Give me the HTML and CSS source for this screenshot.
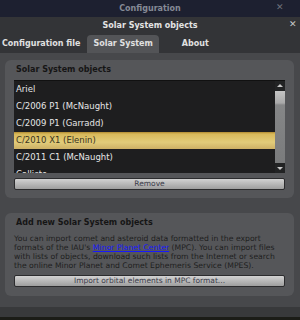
FILE: index.html
```html
<!DOCTYPE html>
<html>
<head>
<meta charset="utf-8">
<link rel="stylesheet" href="styles.css">
</head>
<body>
<div class="topbar">
  <span class="toptitle">Configuration</span>
  <span class="topclose">✕</span>
</div>
<div class="dialog">
  <div class="header">
    <span class="title">Solar System objects</span>
    <span class="close">✕</span>
  </div>
  <div class="tabs">
    <span class="tab">Configuration file</span>
    <span class="tab active">Solar System</span>
    <span class="tab about">About</span>
  </div>
  <div class="content">
    <div class="group g1">
      <div class="gtitle">Solar System objects</div>
      <div class="listwrap">
        <div class="list">
          <div class="item">Ariel</div>
          <div class="item">C/2006 P1 (McNaught)</div>
          <div class="item">C/2009 P1 (Garradd)</div>
          <div class="item sel">C/2010 X1 (Elenin)</div>
          <div class="item">C/2011 C1 (McNaught)</div>
          <div class="item">Callisto</div>
        </div>
        <div class="scroll">
          <div class="arrow up"></div>
          <div class="track"><div class="thumb"></div></div>
          <div class="arrow down"></div>
        </div>
      </div>
      <div class="btn">Remove</div>
    </div>
    <div class="group g2">
      <div class="gtitle">Add new Solar System objects</div>
      <p class="para">You can import comet and asteroid data formatted in the export formats of the IAU's <a class="link">Minor Planet Center</a> (MPC). You can import files with lists of objects, download such lists from the Internet or search the online Minor Planet and Comet Ephemeris Service (MPES).</p>
      <div class="btn">Import orbital elements in MPC format...</div>
    </div>
  </div>
</div>
<div class="floor"></div>
</body>
</html>
```
FILE: styles.css
```css
html, body {
  margin: 0;
  padding: 0;
  width: 300px;
  height: 320px;
  overflow: hidden;
  background: #1b1c17;
  font-family: "DejaVu Sans", sans-serif;
}
.topbar {
  height: 17px;
  background: #1d2030;
  display: flex;
  align-items: center;
  justify-content: center;
  position: relative;
}
.toptitle {
  color: #858a96;
  font-size: 8px;
  font-weight: bold;
}
.topclose {
  position: absolute;
  left: 276px;
  top: 2px;
  color: #6e727c;
  font-size: 9px;
  font-weight: bold;
}
.dialog {
  background: #333437;
  display: flex;
  flex-direction: column;
}
.header {
  height: 16px;
  display: flex;
  align-items: center;
  justify-content: center;
  position: relative;
}
.title {
  color: #e4e4e4;
  font-size: 8px;
  font-weight: bold;
}
.close {
  position: absolute;
  left: 289px;
  top: 2px;
  color: #c8c8c8;
  font-size: 9px;
  font-weight: bold;
}
.tabs {
  height: 20px;
  display: flex;
  align-items: flex-end;
  padding-left: 2px;
}
.tab {
  color: #e0e0e0;
  font-size: 8px;
  font-weight: bold;
  height: 18px;
  line-height: 18px;
  padding: 0 2px 0 0;
}
.tab.active {
  background: #535457;
  border-radius: 4px 4px 0 0;
  padding: 0 6px;
  margin-left: 5px;
}
.tab.about {
  margin-left: 23px;
}
.content {
  background: #47484b;
  padding: 7px 6px 11px 5px;
  display: flex;
  flex-direction: column;
  gap: 15px;
}
.group {
  background: #555659;
  border-radius: 6px;
  padding: 6px 9px 0 9px;
  box-sizing: border-box;
}
.g1 { height: 138px; }
.g2 { height: 83px; }
.gtitle {
  color: #151515;
  font-size: 8px;
  font-weight: bold;
  height: 14px;
  padding-left: 2px;
  line-height: 8px;
}
.listwrap {
  display: flex;
  height: 92px;
  background: #1e1e1f;
  border-top: 1px solid #111;
}
.list {
  flex: 1;
  overflow: hidden;
}
.item {
  height: 17px;
  line-height: 17px;
  color: #e6e6e6;
  font-size: 8.5px;
  padding-left: 2px;
}
.item.sel {
  background: linear-gradient(#b08a30 0, #d8b95a 2px, #e2cc7a 60%, #cdb065 100%);
  color: #3a3420;
}
.scroll {
  width: 10px;
  display: flex;
  flex-direction: column;
  background: #222324;
}
.arrow {
  height: 10px;
  position: relative;
}
.arrow::after {
  content: "";
  position: absolute;
  left: 2px;
  border-left: 3px solid transparent;
  border-right: 3px solid transparent;
}
.arrow.up::after {
  top: 3px;
  border-bottom: 3px solid #c8c8c8;
}
.arrow.down::after {
  top: 4px;
  border-top: 3px solid #c8c8c8;
}
.track {
  flex: 1;
  background: #6d6e70;
}
.thumb {
  height: 100%;
  background: linear-gradient(#c4c4c4 0, #a9a9a9 12px, #858687 14px, #7a7b7c 100%);
}
.btn {
  margin-top: 5px;
  height: 12px;
  box-sizing: border-box;
  border: 1px solid #2c2c2e;
  border-radius: 2px;
  background: linear-gradient(#d2d2d2, #9e9e9e);
  color: #3c3c4a;
  font-size: 7.5px;
  line-height: 10px;
  text-align: center;
}
.g2 .btn { margin-top: 5px; }
.para {
  margin: 0;
  color: #1e1e1e;
  font-size: 7.7px;
  line-height: 9px;
  padding-top: 1px;
}
.link {
  color: #1818ff;
  text-decoration: underline;
}
.floor {
  height: 10px;
  background: #38393b;
}
```
